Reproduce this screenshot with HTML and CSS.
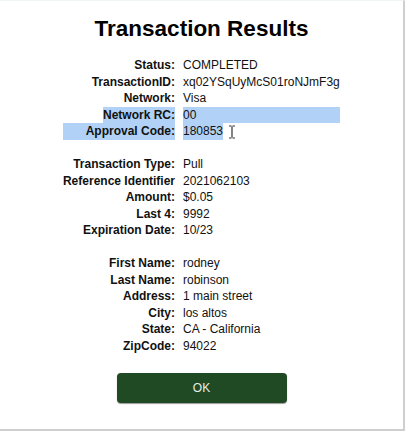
FILE: index.html
```html
<!DOCTYPE html>
<html>
<head>
<meta charset="utf-8">
<link rel="stylesheet" href="styles.css">
</head>
<body>
<div class="panel">
  <h1 class="title">Transaction Results</h1>
  <div class="results">
    <div class="label">Status:</div><div class="value">COMPLETED</div>
    <div class="label">TransactionID:</div><div class="value">xq02YSqUyMcS01roNJmF3g</div>
    <div class="label">Network:</div><div class="value">Visa</div>
    <div class="label"><span class="sel sel-block">Network RC:</span></div><div class="value"><span class="sel sel-block">00</span></div>
    <div class="label"><span class="sel sel-block sel-wide">Approval Code:</span></div><div class="value"><span class="sel">180853</span><svg class="ibeam" width="8" height="14" viewBox="0 0 8 14"><path d="M1 1h2.5M4.5 1H7M4 1.5v11M1 13h2.5M4.5 13H7" stroke="#333" stroke-width="1.2" fill="none"/></svg></div>
    <div class="spacer"></div>
    <div class="label">Transaction Type:</div><div class="value">Pull</div>
    <div class="label">Reference Identifier</div><div class="value">2021062103</div>
    <div class="label">Amount:</div><div class="value">$0.05</div>
    <div class="label">Last 4:</div><div class="value">9992</div>
    <div class="label">Expiration Date:</div><div class="value">10/23</div>
    <div class="spacer"></div>
    <div class="label">First Name:</div><div class="value">rodney</div>
    <div class="label">Last Name:</div><div class="value">robinson</div>
    <div class="label">Address:</div><div class="value">1 main street</div>
    <div class="label">City:</div><div class="value">los altos</div>
    <div class="label">State:</div><div class="value">CA - California</div>
    <div class="label">ZipCode:</div><div class="value">94022</div>
  </div>
  <div class="actions">
    <button class="ok">OK</button>
  </div>
</div>
</body>
</html>
```
FILE: styles.css
```css
html, body {
  margin: 0;
  padding: 0;
  background: #fff;
}
body {
  font-family: "Liberation Sans", Arial, sans-serif;
  color: #111;
}
.panel {
  width: 403px;
  height: 428px;
  border-right: 2px solid #cfcfcf;
  border-bottom: 2px solid #cfcfcf;
  border-top: 1px solid #eef6ef;
  box-sizing: content-box;
  display: flex;
  flex-direction: column;
  align-items: center;
}
.title {
  margin: 15px 0 0 0;
  font-size: 22.5px;
  line-height: 26px;
  font-weight: bold;
  color: #000;
}
.results {
  margin-top: 15px;
  display: grid;
  grid-template-columns: 112px 157px;
  column-gap: 8px;
  font-size: 12px;
  line-height: 16.5px;
}
.label {
  font-weight: bold;
  text-align: right;
  white-space: nowrap;
  display: flex;
  justify-content: flex-end;
}
.value {
  white-space: nowrap;
  display: flex;
  align-items: center;
}
.spacer {
  grid-column: 1 / span 2;
  height: 16.5px;
}
.sel {
  background: #b2d1f7;
}
.sel-block {
  display: block;
  width: 100%;
}
.label .sel-block {
  text-align: right;
  width: 72px;
}
.label .sel-wide {
  width: 112px;
}
.ibeam {
  margin-left: 5px;
  margin-top: 2px;
}
.actions {
  margin-top: 19px;
}
.ok {
  width: 170px;
  height: 30px;
  background: #1f4a24;
  color: #e8ede8;
  border: none;
  border-radius: 4px;
  box-shadow: 0 1px 1px rgba(0,0,0,0.4);
  font-family: "Liberation Sans", Arial, sans-serif;
  font-size: 12px;
  font-weight: normal;
}
```
